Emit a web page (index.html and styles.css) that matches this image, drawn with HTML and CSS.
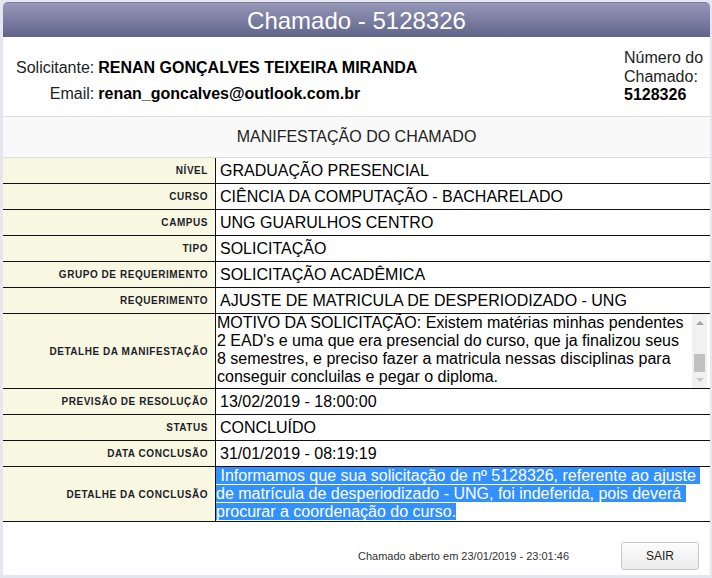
FILE: index.html
```html
<!DOCTYPE html>
<html lang="pt-BR">
<head>
<meta charset="utf-8">
<title>Chamado - 5128326</title>
<link rel="stylesheet" href="styles.css">
</head>
<body>
<div class="dialog">
  <div class="titlebar">Chamado - 5128326</div>

  <div class="header">
    <div class="requester">
      <span class="req-label">Solicitante:</span><strong class="req-value">RENAN GONÇALVES TEIXEIRA MIRANDA</strong>
      <span class="req-label">Email:</span><strong class="req-value">renan_goncalves@outlook.com.br</strong>
    </div>
    <div class="ticket-no">Número do<br>Chamado:<br><strong>5128326</strong></div>
  </div>

  <div class="section-title">MANIFESTAÇÃO DO CHAMADO</div>

  <div class="details">
    <div class="row"><div class="label">NÍVEL</div><div class="value">GRADUAÇÃO PRESENCIAL</div></div>
    <div class="row"><div class="label">CURSO</div><div class="value">CIÊNCIA DA COMPUTAÇÃO - BACHARELADO</div></div>
    <div class="row"><div class="label">CAMPUS</div><div class="value">UNG GUARULHOS CENTRO</div></div>
    <div class="row"><div class="label">TIPO</div><div class="value">SOLICITAÇÃO</div></div>
    <div class="row"><div class="label">GRUPO DE REQUERIMENTO</div><div class="value">SOLICITAÇÃO ACADÊMICA</div></div>
    <div class="row"><div class="label">REQUERIMENTO</div><div class="value">AJUSTE DE MATRICULA DE DESPERIODIZADO - UNG</div></div>
    <div class="row row-memo">
      <div class="label">DETALHE DA MANIFESTAÇÃO</div>
      <div class="value memo">
        <div class="memo-text">MOTIVO DA SOLICITAÇÃO: Existem matérias minhas pendentes<br>2 EAD's e uma que era presencial do curso, que ja finalizou seus<br>8 semestres, e preciso fazer a matricula nessas disciplinas para<br>conseguir concluilas e pegar o diploma.</div>
        <div class="scrollbar">
          <div class="sb-arrow sb-up"><svg width="8" height="4" viewBox="0 0 8 4"><path d="M0 4 L4 0 L8 4 Z"/></svg></div>
          <div class="sb-track"><div class="sb-thumb"></div></div>
          <div class="sb-arrow sb-down"><svg width="8" height="4" viewBox="0 0 8 4"><path d="M0 0 L8 0 L4 4 Z"/></svg></div>
        </div>
      </div>
    </div>
    <div class="row"><div class="label">PREVISÃO DE RESOLUÇÃO</div><div class="value">13/02/2019 - 18:00:00</div></div>
    <div class="row"><div class="label">STATUS</div><div class="value">CONCLUÍDO</div></div>
    <div class="row"><div class="label">DATA CONCLUSÃO</div><div class="value">31/01/2019 - 08:19:19</div></div>
    <div class="row row-conclusion">
      <div class="label">DETALHE DA CONCLUSÃO</div>
      <div class="value conclusion"><div class="conclusion-text"><span class="selected">&nbsp;Informamos que sua solicitação de nº 5128326, referente ao ajuste&nbsp;</span><br><span class="selected">de matrícula de desperiodizado - UNG, foi indeferida, pois deverá&nbsp;</span><br><span class="selected">procurar a coordenação do curso.</span></div></div>
    </div>
  </div>

  <div class="footer">
    <span class="opened">Chamado aberto em 23/01/2019 - 23:01:46</span>
    <button class="btn" type="button">SAIR</button>
  </div>
</div>
</body>
</html>
```

FILE: styles.css
```css
* {
  box-sizing: border-box;
}

html,
body {
  margin: 0;
  padding: 0;
}

body {
  width: 712px;
  height: 578px;
  overflow: hidden;
  background: #e6e6f0;
  font-family: "Liberation Sans", Arial, sans-serif;
}

.dialog {
  margin: 2px 2px 0 3px;
  width: 707px;
  height: 573px;
  background: #ffffff;
  display: flex;
  flex-direction: column;
  border-radius: 5px 5px 0 0;
}

.titlebar {
  height: 35px;
  line-height: 35px;
  text-align: center;
  color: #ffffff;
  font-size: 24px;
  background: linear-gradient(#9798b8, #5f648a);
  border-top: 1px solid #7c7e9e;
  border-radius: 5px 5px 0 0;
}

.header {
  height: 80px;
  border-bottom: 1px solid #dddddd;
  display: flex;
  align-items: flex-start;
  font-size: 16px;
  color: #222222;
}

.requester {
  display: grid;
  grid-template-columns: auto auto;
  column-gap: 4px;
  margin: 18px 0 0 13px;
  line-height: 26px;
}

.req-label {
  text-align: right;
}

.req-value {
  color: #000000;
}

.ticket-no {
  margin: 12px 6px 0 auto;
  width: 80px;
  line-height: 18.5px;
}

.ticket-no strong {
  color: #000000;
}

.section-title {
  height: 41px;
  line-height: 40px;
  border-bottom: 1px solid #dddddd;
  background: #f9f9f9;
  text-align: center;
  font-size: 16px;
  color: #222222;
}

.row {
  display: grid;
  grid-template-columns: 213px 1fr;
  height: 26px;
  border-bottom: 1px solid #111111;
}

.row-memo {
  height: 75px;
}

.row-conclusion {
  height: 55px;
}

.label {
  display: flex;
  align-items: center;
  justify-content: flex-end;
  padding-right: 7px;
  background: #f8f7e2;
  border-right: 1px solid #111111;
  font-size: 10px;
  font-weight: bold;
  letter-spacing: 0.55px;
  color: #1e1e2a;
  white-space: nowrap;
}

.value {
  display: flex;
  align-items: center;
  padding-left: 4px;
  font-size: 16px;
  color: #000000;
  white-space: nowrap;
  overflow: hidden;
}

.memo {
  padding-left: 0;
  align-items: stretch;
}

.memo-text {
  flex: 1;
  padding-left: 1px;
  line-height: 18px;
  white-space: normal;
  overflow: hidden;
}

.scrollbar {
  width: 15px;
  margin-right: 3px;
  background: #f1f1f1;
  display: flex;
  flex-direction: column;
}

.sb-arrow {
  height: 17px;
  display: flex;
  align-items: center;
  justify-content: center;
}

.sb-arrow svg {
  display: block;
}

.sb-up {
  fill: #a3a3a3;
}

.sb-down {
  height: 16px;
  fill: #c8c8c8;
}

.sb-track {
  flex: 1;
  display: flex;
  flex-direction: column;
  justify-content: flex-end;
}

.sb-thumb {
  height: 18px;
  margin: 0 2px;
  background: #c1c1c1;
}

.conclusion {
  padding-left: 0;
}

.conclusion-text {
  line-height: 18px;
}

.selected {
  background: #3390ff;
  color: #ffffff;
}

.footer {
  flex: 1;
  display: flex;
  justify-content: flex-end;
  align-items: center;
  gap: 52px;
  padding: 20px 11px 5px 0;
}

.opened {
  font-size: 11px;
  color: #333333;
}

.btn {
  width: 78px;
  height: 28px;
  border: 1px solid #c9c9c9;
  border-radius: 3px;
  background: linear-gradient(#fdfdfd, #ebebeb);
  font-family: "Liberation Sans", Arial, sans-serif;
  font-size: 12px;
  color: #222222;
  padding: 0;
}
```
